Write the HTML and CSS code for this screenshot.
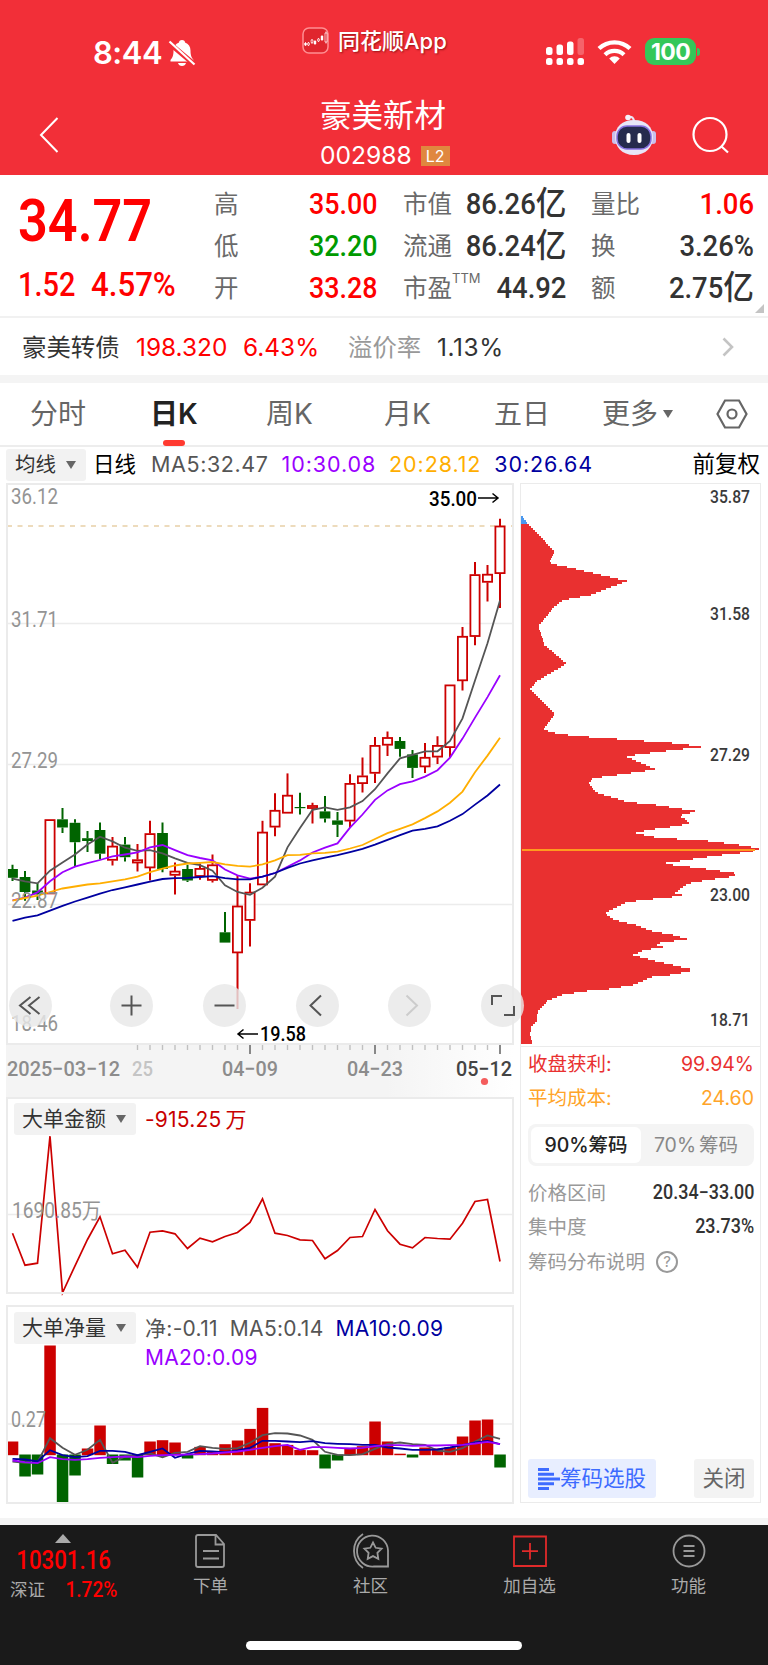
FILE: index.html
```html
<!DOCTYPE html>
<html lang="zh">
<head>
    <meta charset="UTF-8">
    <title>豪美新材 002988</title>
    <link rel="stylesheet" href="styles.css">
</head>
<body>
<header class="header">
    <div class="status">
        <div class="time">8:44
            <svg width="28" height="30" viewBox="0 0 28 30">
                <path d="M14 2c2 0 3 1.200 3 2.500 3.500 1.200 5.500 4 5.500 8 0 5 1 7 3 9.500v1.500H2.500V22c2-2.500 3-4.500 3-9.500 0-4 2-6.800 5.500-8C11 3.200 12 2 14 2zM10 25h8c-.5 2-2 3-4 3s-3.500-1-4-3z" fill="#fff"/>
                <path d="M1 5l25 21" stroke="#f22f38" stroke-width="5"/>
                <path d="M1.500 3.500l25 23" stroke="#fff" stroke-width="2.200"/>
            </svg>
        </div>
        <div class="app">
            <svg width="28" height="28" viewBox="0 0 28 28">
                <rect x="1" y="1" width="25" height="25" rx="6" fill="#e0262e" stroke="#ff8f92" stroke-width="1.500"/>
                <path d="M3.500 15v4M6.500 15v4M10 12v5M13 13v5M16.500 11v4M20 8v6M24 4.500v12" stroke="#fff" stroke-width=".8"/>
                <path d="M2.300 16h2.400v2.200H2.300zM11.800 14h2.400v3h-2.400zM18.800 9h2.400v4h-2.400z" fill="#fff"/>
                <path d="M5.600 16h1.800v2H5.600zM9.100 13h1.800v2.500H9.100zM15.600 12h1.800v2h-1.800zM23 6h2v9h-2z" fill="#e0262e" stroke="#fff" stroke-width=".7"/>
            </svg>
            <span>同花顺App</span>
        </div>
        <div class="signals">
            <svg width="40" height="28" viewBox="0 0 40 28" fill="#fff">
                <rect x="1" y="9" width="6.500" height="8" rx="2.500"/><rect x="11.500" y="6.500" width="6.500" height="10.500" rx="2.500"/>
                <rect x="22" y="3.500" width="6.500" height="13.500" rx="2.500"/><rect x="32.500" y="0" width="6.500" height="17" rx="2.500" opacity=".25"/>
                <rect x="1" y="20" width="6.500" height="7" rx="2.500"/><rect x="11.500" y="20" width="6.500" height="7" rx="2.500"/>
                <rect x="22" y="20" width="6.500" height="7" rx="2.500"/><rect x="32.500" y="20" width="6.500" height="7" rx="2.500"/>
            </svg>
            <svg class="wifi" width="35" height="26" viewBox="0 0 35 26" fill="none" stroke="#fff" stroke-width="4.300">
                <path d="M2 9.500a22.500 22.500 0 0 1 31 0M8 15.700a13.800 13.800 0 0 1 19 0"/>
                <path d="M17.500 25l-5.300-5.500a7.500 7.500 0 0 1 10.600 0z" fill="#fff" stroke="none"/>
            </svg>
            <span class="battery">100</span><i class="nub"></i>
        </div>
    </div>
    <div class="nav">
        <svg class="back" width="20" height="36" viewBox="0 0 20 36" fill="none" stroke="#fff" stroke-width="2"><path d="M18.500 1L2 18l16.500 17"/></svg>
        <div class="title">
            <h1>豪美新材</h1>
            <p>002988<b>L2</b></p>
        </div>
        <div class="tools">
            <svg width="44" height="42" viewBox="0 0 44 42">
                <path d="M16 3c4-1 6 1 6 5" fill="none" stroke="#e9e6f5" stroke-width="2"/><circle cx="16" cy="3.500" r="2.800" fill="#f4f2fb"/>
                <rect x="0" y="17" width="6" height="13" rx="3" fill="#c9bfeb"/><rect x="38" y="17" width="6" height="13" rx="3" fill="#c9bfeb"/>
                <path d="M22 6c12 0 19 7 19 17S34 41 22 41 3 33 3 23 10 6 22 6z" fill="#e8e6f7"/>
                <rect x="5" y="12" width="34" height="23" rx="10" fill="#252b4d" stroke="#8671e0" stroke-width="1.500"/>
                <rect x="14.500" y="19" width="4" height="10" rx="2" fill="#fff"/><rect x="25.500" y="19" width="4" height="10" rx="2" fill="#fff"/>
            </svg>
            <svg width="38" height="38" viewBox="0 0 38 38" fill="none" stroke="#fff" stroke-width="2.200"><circle cx="18" cy="18.500" r="16.500"/><path d="M29.500 30.500l6.500 6"/></svg>
        </div>
    </div>
</header>

<section class="quote">
    <div class="price">
        <div class="last din">34.77</div>
        <div class="change"><span class="din">1.52</span><span class="din">4.57%</span></div>
    </div>
    <dl class="col c1">
        <dt>高</dt><dd class="din red">35.00</dd>
        <dt>低</dt><dd class="din green">32.20</dd>
        <dt>开</dt><dd class="din red">33.28</dd>
    </dl>
    <dl class="col c2">
        <dt>市值</dt><dd class="din">86.26<em>亿</em></dd>
        <dt>流通</dt><dd class="din">86.24<em>亿</em></dd>
        <dt>市盈<sup>TTM</sup></dt><dd class="din">44.92</dd>
    </dl>
    <dl class="col c3">
        <dt>量比</dt><dd class="din red">1.06</dd>
        <dt>换</dt><dd class="din">3.26%</dd>
        <dt>额</dt><dd class="din">2.75<em>亿</em></dd>
    </dl>
    <i class="corner"></i>
</section>

<section class="bond">
    <span class="bond-name">豪美转债</span>
    <span class="bond-price red">198.320</span>
    <span class="bond-rate red">6.43%</span>
    <span class="bond-label">溢价率</span>
    <span class="bond-value">1.13%</span>
    <svg class="arrow" width="12" height="20" viewBox="0 0 12 20" fill="none" stroke="#c4c4c4" stroke-width="2.600"><path d="M1.500 1.500l8.500 8.500-8.500 8.500"/></svg>
</section>

<nav class="tabs">
    <a>分时</a><a class="on"><span>日K</span></a><a>周K</a><a>月K</a><a>五日</a><a>更多<i class="tri small"></i></a>
    <svg width="32" height="30" viewBox="0 0 32 30" fill="none" stroke="#666" stroke-width="2.200"><path d="M9 1.500h14l7.500 13.500L23 28.500H9L1.500 15z"/><circle cx="16" cy="15" r="4.500"/></svg>
</nav>

<div class="ma-bar">
    <span class="pick">均线<i class="tri"></i></span>
    <b>日线</b>
    <span class="ma ma5">MA5:32.47</span>
    <span class="ma ma10">10:30.08</span>
    <span class="ma ma20">20:28.12</span>
    <span class="ma ma30">30:26.64</span>
    <b class="adjust">前复权</b>
</div>

<main class="board">
    <div class="left">
        <div class="kline">
            <svg width="508" height="562" viewBox="6 483 508 562" id="kline">
                <path d="M7 623.500h505M7 764.500h505M7 904.500h505" stroke="#ececec" stroke-width="1.500"/>
                <path d="M7 526h506" stroke="#e8cfa6" stroke-width="1.500" stroke-dasharray="5 5.500"/>
            </svg>
            <div class="controls">
                <button class="first"><svg viewBox="0 0 43 43"><path d="M21.500 13L11 21.500 21.500 30M30.500 13L20 21.500 30.500 30"/></svg></button>
                <button><svg viewBox="0 0 43 43"><path d="M11.500 21.500h20M21.500 11.500v20"/></svg></button>
                <button><svg viewBox="0 0 43 43"><path d="M11.500 21.500h20"/></svg></button>
                <button><svg viewBox="0 0 43 43"><path d="M25 11.500L14.500 21.500 25 31.500"/></svg></button>
                <button class="off"><svg viewBox="0 0 43 43"><path d="M18.500 11.500L29 21.500 18.500 31.500"/></svg></button>
                <button><svg viewBox="0 0 43 43"><path d="M21 12H11v9M23 31h10v-9"/></svg></button>
            </div>
        </div>
        <div class="axis">
            <svg width="508" height="52" viewBox="6 1045 508 52" id="axis"></svg>
        </div>
        <div class="sub">
            <div class="sub-head">
                <span class="pick wide">大单金额<i class="tri"></i></span>
                <span class="amount">-915.25<em>万</em></span>
            </div>
            <svg width="508" height="197" viewBox="6 1096.500 508 197" id="amount">
                <path d="M7 1214h505" stroke="#ececec" stroke-width="1.500"/>
            </svg>
        </div>
        <div class="sub">
            <div class="sub-head">
                <span class="pick wide">大单净量<i class="tri"></i></span>
                <p class="legend"><span class="ma5">净:-0.11</span><span class="ma5">MA5:0.14</span><span class="ma30">MA10:0.09</span><br><span class="ma10">MA20:0.09</span></p>
            </div>
            <svg width="508" height="199" viewBox="6 1304.500 508 199" id="volume">
                <path d="M7 1423.500h505" stroke="#ececec" stroke-width="1.500"/>
            </svg>
        </div>
    </div>

    <aside class="right">
        <svg width="239" height="562" viewBox="521 484 239 562" id="chips"></svg>
        <div class="detail">
            <p class="row c-red"><span>收盘获利:</span><span>99.94%</span></p>
            <p class="row c-orange"><span>平均成本:</span><span>24.60</span></p>
            <div class="seg"><b>90%筹码</b><span>70%<em>筹码</em></span></div>
            <p class="row"><span>价格区间</span><b class="din">20.34−33.00</b></p>
            <p class="row"><span>集中度</span><b class="din">23.73%</b></p>
            <p class="row help"><span>筹码分布说明</span><i>?</i></p>
            <div class="actions">
                <a class="choose"><svg width="22" height="22" viewBox="0 0 22 22" stroke="#3d6bff" stroke-width="3"><path d="M0 1.500h11M0 6.200h16M0 11h22M0 15.800h16M0 20.500h11"/></svg>筹码选股</a>
                <a class="close">关闭</a>
            </div>
        </div>
    </aside>
</main>

<footer class="footer">
    <div class="index">
        <i class="up"></i>
        <div class="din point">10301.16</div>
        <div class="index-row"><span>深证</span><b class="din">1.72%</b></div>
    </div>
    <div class="item">
        <svg width="36" height="36" viewBox="0 0 36 36"><path d="M5 2h18l8 9v21q0 2-2 2H5q-2 0-2-2V4q0-2 2-2zM22.500 2v9.500H31M10 18h16M10 25.500h16"/></svg>
        下单
    </div>
    <div class="item">
        <svg width="38" height="36" viewBox="0 0 38 36"><path d="M11 1C-1 9-1 27 11 35M36 33.500H22a15.500 15.500 0 1 1 14-16zM21 9.500l2.700 5.300 5.900.9-4.200 4.200.9 5.900-5.300-2.700-5.300 2.700.9-5.900-4.200-4.200 5.900-.9z"/></svg>
        社区
    </div>
    <div class="item add">
        <svg width="36" height="36" viewBox="0 0 36 36"><path d="M2 3.500h32v29.500H2zM18 10v16.500M10 18.200h16"/></svg>
        加自选
    </div>
    <div class="item">
        <svg width="36" height="36" viewBox="0 0 36 36"><circle cx="18" cy="18" r="15.500"/><path d="M12.500 13h11M12.500 18h11M12.500 23h11"/></svg>
        功能
    </div>
    <i class="home"></i>
</footer>

<script>
    var NS = 'http://www.w3.org/2000/svg';
    var STEP = 12.5;
    //[最高, 实体上沿, 实体下沿, 最低, 1涨 0跌]
    var candles = [
        [864.7,869,877.8,881,0],[871,877,892,900.7,0],[883.3,890.5,894.4,900,0],[819.5,819.5,894,894,1],
        [808,819.3,827.5,833,0],[819.3,822.8,842.2,866.7,0],[831,838.2,841,852,0],[822.4,830,853.7,859.6,0],
        [837,846,860.4,865.5,1],[837,844.6,857.2,861.6,0],[844,859.6,863.1,871.5,1],[820.8,833.5,868,880.5,1],
        [822.4,833,869,872.2,0],[862.4,871,875.4,894.4,1],[864.7,869,880.5,882,0],[863.5,868.3,876.6,879.8,1],
        [854.5,864.7,880.5,882.5,1],[912,932.3,942.6,942.6,0],[875.4,905.9,953,1009,1],[883.3,892,920.5,946.6,1],
        [820.8,832,885,885,1],[793.2,810.2,827.2,836.3,1],[773.4,795.1,813.3,813.3,1],[792.8,807,808.2,814.5,0],
        [802.7,805.4,808.6,823.6,1],[796,811.4,818.5,822.4,0],[812,820.4,824.8,837,0],[774.2,783.3,821.2,828,1],
        [757.6,775.8,783.7,792.4,1],[737,745.3,773.4,782.9,1],[731.5,737.4,745.3,756,1],[737,741,748.9,756.8,0],
        [750,754.4,767.9,778.1,0],[743,757.2,767,773,1],[736.2,745.3,757.2,763.9,1],[684.8,684.8,747.7,757.6,1],
        [627,636.2,680.9,690.4,1],[561.9,574.5,636.6,645.3,1],[565,574.1,582.4,601.4,1],[518.8,525.9,573.7,608,1]
    ];
    var ma5 = [878.6,881.3,883.3,870.7,862.4,854.5,844.6,836.7,841.4,847.7,850.9,850.1,853.3,858.4,862.8,865.1,870.7,885.3,892,894.8,887.7,876.6,847.3,828,809.8,807.4,809.8,807.4,801.1,789.2,773.4,758.4,754.8,751.3,751.3,741,718.4,680.5,643.3,600.6];
    var ma10 = [900.3,897.6,892.4,881.3,872.2,866.7,863.2,860,856.4,854.5,852.5,847.3,845,850.1,855.2,858,860.4,869.5,875.4,878.6,876.6,873,866.7,860.4,852.5,847.7,843.4,827.6,814.5,799.9,790.4,784.1,781.3,776.6,770.2,757.6,738.6,717.6,697.1,675.3];
    var ma20 = [900.7,898,895.6,892,888.5,886.5,884.5,883.3,881.3,879.4,876.6,872.2,868.7,865.5,863.5,862.8,862,864.3,865.9,866.7,864.3,860.4,855.2,854.8,853.3,852.9,851.7,848.5,845,839,833.1,828.8,824.4,818.1,811.4,802.7,791.6,772.2,755.6,737.8];
    var ma30 = [920.9,917.7,915.3,910.6,905.9,901.5,897.6,893.6,890,887.3,884.5,881.7,879,878.2,877.8,877,876.2,878.2,879.4,879.4,876.6,873,867.9,863.5,860.4,857.6,855.2,852.1,848.9,844.6,839.8,835.1,830.7,828.8,826.4,820.8,814.1,804.6,795.5,784.5];
    var amounts = [1232.7,1264.7,1262.7,1135.7,1292.3,1265.3,1239,1216.3,1253.3,1249.7,1266.7,1231.7,1230.3,1233.3,1248,1237.7,1241.3,1236,1232,1222,1198.3,1232.7,1235,1239.3,1240,1258.3,1250,1237,1236,1209,1230.3,1243.7,1247.3,1237,1238,1238.7,1222.7,1201,1199,1261];
    var bars = [13.7,-22,-20,109.7,-47.5,-21,6.7,29.7,-9.5,-6,-23,13.7,15,12.7,-4,8.3,4,11,14.7,26.3,47.3,12,10.3,5.3,5,-14,-6,7.3,9,33.7,13.7,1.5,-3,7.7,6.7,8,18.7,34.7,35.7,-13];
    var v5 = [1461,1462.3,1462,1437.7,1447.3,1454.3,1449.3,1439.3,1462.3,1456,1454.7,1453,1456.7,1452.3,1451.3,1445.7,1447.3,1448.3,1447.7,1442.3,1434.7,1432.7,1433,1435,1439.3,1451.3,1454.3,1454.7,1453.7,1448.3,1443.3,1442,1443.7,1444.3,1450,1451.3,1447.7,1441,1435,1438.3];
    var v10 = [1458.3,1459,1461,1449.7,1454.7,1456.7,1455.7,1450.3,1450.3,1451.3,1454.7,1451.3,1448,1457.3,1453.3,1450.3,1451,1451.7,1450,1447.3,1440.3,1440.3,1441,1441.7,1440.7,1442.7,1443.3,1443.7,1444.3,1444.3,1447,1448,1449.3,1449.3,1449,1447,1444.7,1442,1440.3,1443.7];
    var v20 = [1460,1461.7,1462.7,1456.7,1458.7,1459.3,1458.7,1457.3,1456.7,1456,1456.7,1455.3,1454.7,1454.3,1454,1453.7,1453,1452,1451,1449.3,1447.3,1445.7,1444.3,1449.3,1446.7,1446.7,1447.3,1448,1447.3,1445.7,1444.7,1444.7,1445.3,1445,1445,1444.7,1444.3,1443,1441.3,1443.7];
    //筹码分布 [y, 宽度]
    var chips = [[516,0],[523.3,6],[551.3,32.7],[561.7,27.7],[564,30.7],[567.3,46.7],[581,105],[595,69.3],[600,41.7],[606.7,32.7],[626,16.7],[645,22.7],[663.7,45],[681.3,15],[689.3,8.3],[714,33.3],[729.3,21.7],[732.7,31.3],[736,53.3],[738.3,86],[740.7,118.3],[743,150.7],[746.7,182],[750,152.7],[754,120],[756.3,103.7],[769.3,134],[773.3,107.7],[775.3,93.3],[778.3,70.7],[783.3,67.3],[792.3,74],[795.3,83.3],[802,106],[805.3,136.7],[808,153.3],[811.3,175.3],[815.7,157.3],[819.7,164.3],[823.3,167.3],[825.7,157.3],[829.3,131],[832.7,113.3],[836.7,129.3],[839,155.3],[841,186.7],[844.7,216],[848.7,238.7],[852,227.7],[854.3,205],[858.3,176.3],[863.7,140],[867.3,171],[870,191.7],[873.7,216.7],[876.7,210],[879.7,187.7],[883.7,165.7],[893.3,152.7],[894.3,163.3],[897,150],[898.7,134.3],[902,105],[913.3,83.3],[920,92.7],[925.3,115.3],[931.7,131.7],[934.3,149],[939,165.3],[944,131.7],[947,141],[950.3,121.7],[955,111.7],[959.7,128.3],[963.3,143.3],[970,173],[974.7,151],[976.7,131],[985,111.7],[989,87.7],[990.7,67],[994.7,41],[1001,25.7],[1011.7,16],[1021.7,15.3],[1026,10],[1033.3,8.3],[1044.7,10.7]];

    function add(id, tag, attrs, text) {
        var el = document.createElementNS(NS, tag);
        for (var k in attrs) {
            el.setAttribute(k, attrs[k]);
        }
        if (text) el.textContent = text;
        document.getElementById(id).appendChild(el);
    }
    function line(id, arr, color, width) {
        var pts = arr.map(function (y, i) {
            return STEP * (i + 1) + ',' + y;
        });
        add(id, 'polyline', {points: pts.join(' '), fill: 'none', stroke: color, 'stroke-width': width || 1.8});
    }
    //x 左边界, y 基线, w 文字宽度
    function label(id, text, x, y, w, cls) {
        add(id, 'text', {x: x, y: y, textLength: w, lengthAdjust: 'spacingAndGlyphs', 'class': cls}, text);
    }

    //K线
    candles.forEach(function (c, i) {
        var x = STEP * (i + 1);
        var color = c[4] ? '#cc0000' : '#006400';
        add('kline', 'path', {d: 'M' + x + ' ' + c[0] + 'V' + c[1] + 'M' + x + ' ' + c[2] + 'V' + c[3], stroke: color, 'stroke-width': 2});
        if (c[4]) {
            add('kline', 'rect', {x: x - 4.6, y: c[1] + .6, width: 9.2, height: Math.max(c[2] - c[1] - 1.2, 1), fill: '#fff', stroke: color, 'stroke-width': 1.8});
        } else {
            add('kline', 'rect', {x: x - 5.4, y: c[1], width: 10.8, height: c[2] - c[1], fill: color});
        }
    });
    line('kline', ma5, '#555');
    line('kline', ma10, '#9a00ff');
    line('kline', ma20, '#ffae00');
    line('kline', ma30, '#0000a0');
    label('kline', '36.12', 11, 504, 47, 'tick');
    label('kline', '31.71', 11, 627, 47, 'tick');
    label('kline', '27.29', 11, 767.5, 47, 'tick');
    label('kline', '22.87', 11, 908, 47, 'tick');
    label('kline', '18.46', 11, 1030.5, 47, 'tick');
    label('kline', '35.00', 429, 505.5, 48, 'mark');
    label('kline', '19.58', 260, 1041, 46, 'mark');
    add('kline', 'path', {d: 'M478 498h20M492.500 493.500l5.500 4.500-5.500 4.500M258 1034h-20M243.500 1029.500l-5.500 4.500 5.500 4.500', fill: 'none', stroke: '#000', 'stroke-width': 1.5});

    //日期轴
    for (var i = 11; i <= 40; i++) {
        var big = i % 10 === 0;
        add('axis', 'path', {d: 'M' + i * STEP + ' 1045v' + (big ? 9 : 5), stroke: big ? '#888' : '#c0c0c0', 'stroke-width': big ? 2 : 1.4});
    }
    label('axis', '2025−03−12', 7, 1076, 113, 'date');
    label('axis', '25', 132, 1076, 21, 'date faint');
    label('axis', '04−09', 222, 1076, 56, 'date');
    label('axis', '04−23', 347, 1076, 56, 'date');
    label('axis', '05−12', 456, 1076, 56, 'date now');
    add('axis', 'circle', {cx: 484.5, cy: 1081.5, r: 3.6, fill: '#f45d5d'});

    //大单金额
    line('amount', amounts, '#cc0000', 1.7);
    label('amount', '1690.85万', 12, 1217, 89, 'tick');

    //大单净量
    bars.forEach(function (b, i) {
        add('volume', 'rect', {x: STEP * (i + 1) - 5.7, y: b > 0 ? 1454.7 - b : 1454, width: 11.5, height: Math.abs(b), fill: b > 0 ? '#cc0000' : '#006400'});
    });
    line('volume', v5, '#555');
    line('volume', v10, '#0000a0');
    line('volume', v20, '#9a00ff');
    label('volume', '0.27', 11, 1426.5, 35, 'tick');

    //筹码
    var n = 0;
    for (var y = 516; y < 1044; y += 2) {
        while (n < chips.length - 2 && chips[n + 1][0] < y + 1) n++;
        var a = chips[n], b = chips[n + 1];
        var w = a[1] + (b[1] - a[1]) * (y + 1 - a[0]) / (b[0] - a[0]);
        add('chips', 'rect', {x: 521, y: y, width: Math.max(w, 0) + .7, height: 2, 'shape-rendering': 'crispEdges', fill: y < 524 ? '#4a98ef' : '#e93030'});
    }
    add('chips', 'path', {d: 'M522 850h233', stroke: '#ff9a1e', 'stroke-width': 2});
    [['35.87', 503], ['31.58', 620], ['27.29', 760.5], ['23.00', 901], ['18.71', 1025.5]].forEach(function (t) {
        label('chips', t[0], 710, t[1], 40, 'chip-tick');
    });
</script>
</body>
</html>
```

FILE: styles.css
```css
*{
    margin: 0;
    padding: 0;
    box-sizing: border-box;
}
body{
    width: 768px;
    height: 1665px;
    overflow: hidden;
    background-color: #fff;
    color: #333;
    font-family: Inter, "Noto Sans CJK SC", sans-serif;
}
i, em{
    font-style: normal;
}
svg{
    display: block;
    flex: none;
    overflow: visible;
}
.din{
    font-family: Roboto, "Noto Sans CJK SC", sans-serif;
    font-weight: 500;
    transform: scaleX(.89);
    transform-origin: right center;
    white-space: nowrap;
}
.red{
    color: #ff0000;
}
.green{
    color: #009a00;
}

/* 顶部 */
.header{
    height: 175px;
    background-color: #f22f38;
    color: #fff;
}
.status{
    display: flex;
    height: 90px;
    padding: 27px 68px 0 93px;
}
.time{
    display: flex;
    width: 209px;
    padding-top: 7px;
    gap: 6px;
    font-size: 31px;
    font-weight: 600;
    line-height: 38px;
    letter-spacing: -.5px;
}
.time svg{
    margin-top: 4px;
}
.app{
    display: flex;
    gap: 8px;
    width: 243px;
    font-size: 22px;
    line-height: 29px;
    font-weight: 500;
    text-shadow: 1px 1px 2px rgba(90,0,0,.6);
}
.signals{
    display: flex;
    padding-top: 11px;
}
.wifi{
    margin: 1px 13px 0 12px;
}
.battery{
    width: 51px;
    height: 27px;
    border-radius: 9px;
    background-color: #34c759;
    font-size: 23px;
    line-height: 28px;
    font-weight: 700;
    text-align: center;
    letter-spacing: -.6px;
}
.nub{
    width: 3px;
    height: 8px;
    margin: 10px 0 0 1px;
    border-radius: 0 3px 3px 0;
    background-color: #34c759;
}
.nav{
    display: flex;
    height: 85px;
    padding-left: 39px;
}
.back{
    margin-top: 27px;
}
.title{
    width: 292px;
    margin-left: 261px;
}
.title h1{
    padding-top: 2px;
    font-size: 31.500px;
    line-height: 48px;
    font-weight: 400;
}
.title p{
    display: flex;
    align-items: center;
    gap: 9px;
    font-size: 24.600px;
    line-height: 31px;
}
.title b{
    width: 29px;
    height: 20px;
    background-color: #e0873f;
    font-size: 16px;
    line-height: 20px;
    font-weight: 400;
    text-align: center;
}
.tools{
    display: flex;
    gap: 36px;
    padding-top: 24px;
}
.tools svg + svg{
    margin-top: 2px;
}

/* 报价 */
.quote{
    display: flex;
    position: relative;
    height: 143px;
    padding-top: 8px;
    border-bottom: 2px solid #f1f1f1;
}
.price{
    width: 214px;
    padding-left: 18px;
    color: #ff0000;
}
.price .din{
    display: inline-block;
    transform-origin: left center;
}
.price .last{
    font-size: 60px;
    line-height: 76px;
    font-weight: 600;
    transform: scaleX(.87);
}
.change{
    display: flex;
    gap: 16px;
    margin-top: 6px;
    font-size: 32.500px;
    line-height: 40px;
}
.change .din{
    width: 57px;
}
.change .din + .din{
    transform: scaleX(.96);
}
.col{
    display: grid;
    grid-template-columns: auto minmax(0, 1fr);
    grid-auto-rows: 42px;
    font-size: 24.500px;
    line-height: 42px;
}
.col dt{
    color: #6a6a6a;
    white-space: nowrap;
}
.col dd{
    display: flex;
    justify-content: flex-end;
    font-size: 29.500px;
    transform: scaleX(.93);
}
.col dd em{
    font-size: 33px;
}
.c1{
    width: 163px;
}
.c2{
    width: 163px;
    margin-left: 26px;
}
.c3{
    width: 163px;
    margin-left: 25px;
}
.c1 dd{
    transform: scaleX(.91);
}
.col sup{
    font-size: 13px;
    line-height: 10px;
    vertical-align: 14px;
}
.corner{
    position: absolute;
    right: 4px;
    bottom: 3px;
    border-left: 9px solid transparent;
    border-bottom: 9px solid #c4c4c4;
}
.bond{
    display: flex;
    align-items: center;
    height: 65px;
    padding: 1px 34px 0 22px;
    border-bottom: 8px solid #f4f4f4;
    font-size: 24.400px;
    line-height: 40px;
}
.bond span{
    white-space: nowrap;
}
.bond-name{
    width: 114px;
}
.bond-price{
    width: 107px;
}
.bond-rate{
    width: 105px;
}
.bond-label{
    width: 89px;
    color: #999;
}
.bond-value{
    letter-spacing: .6px;
}
.arrow{
    margin-left: auto;
}

/* 周期切换 */
.tabs{
    display: grid;
    grid-template-columns: 120px 116px 118px 110px 108px 114px 32px;
    align-items: center;
    height: 64px;
    padding: 0 0 0 30px;
    border-bottom: 2px solid #ededed;
    font-size: 28px;
    line-height: 40px;
    color: #666;
}
.tabs .on{
    color: #222;
    font-weight: 600;
}
.on span{
    position: relative;
}
.on span::after{
    content: "";
    position: absolute;
    left: 50%;
    bottom: -15px;
    width: 22px;
    height: 6px;
    margin-left: -11px;
    border-radius: 3px;
    background-color: #ff3a30;
}
.tri{
    display: inline-block;
    margin-left: 10px;
    border: 5.500px solid transparent;
    border-top: 8px solid #666;
    border-bottom: none;
    vertical-align: 4px;
}
.tri.small{
    margin-left: 5px;
    vertical-align: 6px;
}
.ma-bar{
    display: flex;
    align-items: center;
    height: 36px;
    padding: 0 8px 1px 6px;
    font-size: 21.500px;
    line-height: 32px;
    color: #000;
}
.ma-bar b{
    margin-top: -2px;
    font-weight: 400;
}
.pick{
    width: 80px;
    height: 32px;
    margin-right: 7px;
    padding-left: 9px;
    border-radius: 3px;
    background-color: #f2f2f2;
    font-size: 20.500px;
    line-height: 32px;
    color: #333;
    white-space: nowrap;
}
.pick .tri{
    vertical-align: 3px;
}
.pick.wide{
    width: 122px;
    margin-right: 9px;
    padding-left: 8px;
    font-size: 21px;
}
.ma-bar .ma{
    margin: -1px 0 0 13px;
    letter-spacing: .9px;
}
.ma-bar .ma5{
    margin-left: 15px;
    letter-spacing: .6px;
}
.ma5{
    color: #555;
}
.ma10{
    color: #9a00ff;
}
.ma20{
    color: #ffae00;
}
.ma30{
    color: #0000a0;
}
.ma-bar .adjust{
    margin-left: auto;
    font-size: 22.500px;
}

/* 图表 */
.board{
    display: flex;
    gap: 6px;
    height: 1020px;
    padding-left: 6px;
}
.left{
    width: 508px;
}
.kline{
    position: relative;
    height: 562px;
    outline: 2px solid #ebebeb;
    outline-offset: -2px;
}
.controls{
    position: absolute;
    z-index: 1;
    left: 3px;
    top: 501px;
    display: flex;
    gap: 49.700px;
}
.controls button{
    width: 43px;
    height: 43px;
    border: none;
    border-radius: 50%;
    background-color: rgba(232,232,232,.82);
}
.controls .first{
    margin-right: 8.500px;
}
.controls svg{
    fill: none;
    stroke: #555;
    stroke-width: 2;
}
.controls .off svg{
    stroke: #ccc;
}
.axis{
    height: 52px;
    background: linear-gradient(90deg, #f4f4f4 75%, #fff);
}
.sub{
    position: relative;
    height: 197px;
    margin-bottom: 11px;
    outline: 2px solid #ebebeb;
    outline-offset: -2px;
}
.sub + .sub{
    height: 199px;
}
/* 指标名称浮在图上 */
.sub-head{
    position: absolute;
    left: 8px;
    top: 6px;
    display: flex;
    font-size: 21px;
    line-height: 34px;
}
.sub + .sub .sub-head{
    top: 7px;
}
.amount{
    color: #c80000;
    letter-spacing: .2px;
}
.amount em{
    margin-left: 4px;
}
.legend{
    line-height: 29px;
    padding-top: 2px;
    white-space: nowrap;
    letter-spacing: .3px;
}
.legend span{
    margin-right: 12px;
}
svg text{
    font-family: Roboto, "Noto Sans CJK SC", sans-serif;
}
.tick{
    font-size: 21.500px;
    fill: #949494;
}
.mark{
    font-size: 21px;
    font-weight: 500;
    fill: #000;
}
.date{
    font-size: 21px;
    font-weight: 500;
    fill: #8c8c8c;
}
.faint{
    fill: #c4c4c4;
}
.now{
    fill: #444;
}
.chip-tick{
    font-size: 18px;
    font-weight: 500;
    fill: #3a3a3a;
}
.right{
    width: 241px;
    border: 1px solid #ebebeb;
}
.detail{
    display: flex;
    flex-direction: column;
    height: 456px;
    padding: 0 6px 4px 7px;
    border-top: 1px solid #ebebeb;
}
.row{
    display: flex;
    justify-content: space-between;
    height: 34.300px;
    font-size: 19.500px;
    line-height: 34px;
    color: #999;
}
.row b{
    color: #333;
    transform: scaleX(.92);
}
.row.c-red{
    color: #e93030;
}
.row.c-orange{
    color: #ffa428;
}
.seg{
    display: flex;
    height: 42px;
    margin: 8px 0 10px;
    padding: 3px;
    border-radius: 8px;
    background-color: #f4f4f4;
    font-size: 19.500px;
    line-height: 36px;
    text-align: center;
    color: #888;
}
.seg b{
    width: 110px;
    border-radius: 6px;
    background-color: #fff;
    color: #222;
    font-weight: 500;
}
.seg span{
    flex: 1;
}
.seg em{
    margin-left: 3px;
}
.row.help{
    justify-content: flex-start;
    align-items: center;
    gap: 11px;
    margin-top: 1px;
}
.help i{
    width: 22px;
    height: 22px;
    border: 2px solid #999;
    border-radius: 50%;
    font-size: 15px;
    line-height: 18px;
    text-align: center;
}
.actions{
    display: flex;
    justify-content: space-between;
    margin-top: auto;
    font-size: 21.500px;
    line-height: 39px;
}
.choose{
    display: flex;
    align-items: center;
    width: 128px;
    padding-left: 10px;
    border-radius: 3px;
    background-color: #e8eeff;
    color: #3d6bff;
    white-space: nowrap;
}
.close{
    width: 60px;
    border-radius: 3px;
    background-color: #f3f3f3;
    color: #666;
    text-align: center;
}

/* 底部 */
.footer{
    position: relative;
    display: flex;
    height: 147px;
    margin-top: 15px;
    padding-top: 8px;
    border-top: 7px solid #f4f4f4;
    background-color: #1a1a1a;
    color: #aaa;
    font-size: 17.500px;
}
.index{
    width: 127px;
    color: #ff0000;
}
.up{
    display: block;
    width: 0;
    margin: 1px 0 0 55px;
    border: 8px solid transparent;
    border-top: none;
    border-bottom: 9px solid #aaa;
}
.index .point{
    padding-right: 18px;
    font-size: 25px;
    line-height: 36px;
    text-align: right;
}
.index-row{
    display: flex;
    justify-content: space-between;
    padding: 1px 10px 0;
    line-height: 20px;
}
.index-row span{
    color: #aaa;
}
.index-row b{
    font-size: 21.500px;
    line-height: 19px;
}
.item{
    display: flex;
    flex-direction: column;
    align-items: center;
    width: 159px;
    line-height: 30px;
}
.index + .item{
    margin: 0 1px 0 4px;
}
.item svg{
    margin-bottom: 2px;
    fill: none;
    stroke: #999;
    stroke-width: 1.800;
}
.add svg{
    stroke: #e02a2a;
}
.home{
    position: absolute;
    left: 246px;
    bottom: 15px;
    width: 276px;
    height: 9px;
    border-radius: 5px;
    background-color: #fff;
}
```
